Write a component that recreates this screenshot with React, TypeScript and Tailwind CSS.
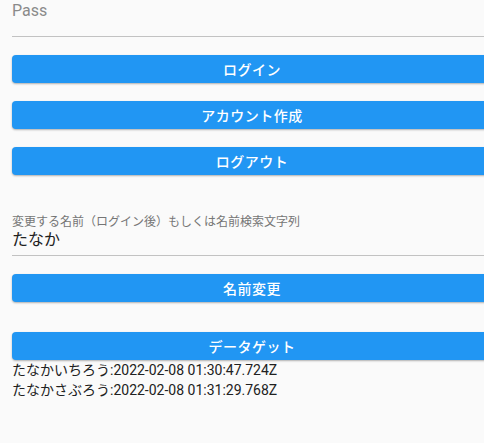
import React, { useState } from 'react';

const font = "font-['Roboto','Noto_Sans_CJK_JP',sans-serif]";

const Btn: React.FC<{ label: string; className?: string }> = ({ label, className = '' }) => (
  <button
    className={`h-7 w-full rounded bg-[#2196f3] pt-px text-white text-[14px] font-medium tracking-[0.5px] leading-none shadow-[0_1px_2px_rgba(0,0,0,0.3)] cursor-pointer ${className}`}
  >
    {label}
  </button>
);

export default function App() {
  const [name] = useState('たなか');
  const rows = [
    'たなかいちろう:2022-02-08 01:30:47.724Z',
    'たなかさぶろう:2022-02-08 01:31:29.768Z',
  ];

  return (
    <div className={`w-[484px] h-[443px] overflow-hidden bg-[#fafafa] ${font}`}>
      <div className="w-[480px] ml-3 flex flex-col">
        {/* Pass field */}
        <div className="border-b border-[#c2c2c2] pt-px pb-[15px]">
          <div className="h-5 text-[16px] leading-5 text-[#8a8a8a]">Pass</div>
        </div>

        <Btn label="ログイン" className="mt-[18px]" />
        <Btn label="アカウント作成" className="mt-[18px]" />
        <Btn label="ログアウト" className="mt-[18px]" />

        {/* Name field */}
        <div className="mt-[40px] border-b border-[#c2c2c2] pb-[6px]">
          <div className="text-[12px] leading-[15px] text-[#757575]">
            変更する名前（ログイン後）もしくは名前検索文字列
          </div>
          <div className="text-[16px] leading-[19px] text-[#212121]">{name}</div>
        </div>

        <Btn label="名前変更" className="mt-[18px]" />
        <Btn label="データゲット" className="mt-[30px]" />

        <div className="flex flex-col">
          {rows.map((r) => (
            <div key={r} className="text-[14px] leading-5 text-[#212121]">
              {r}
            </div>
          ))}
        </div>
      </div>
    </div>
  );
}
